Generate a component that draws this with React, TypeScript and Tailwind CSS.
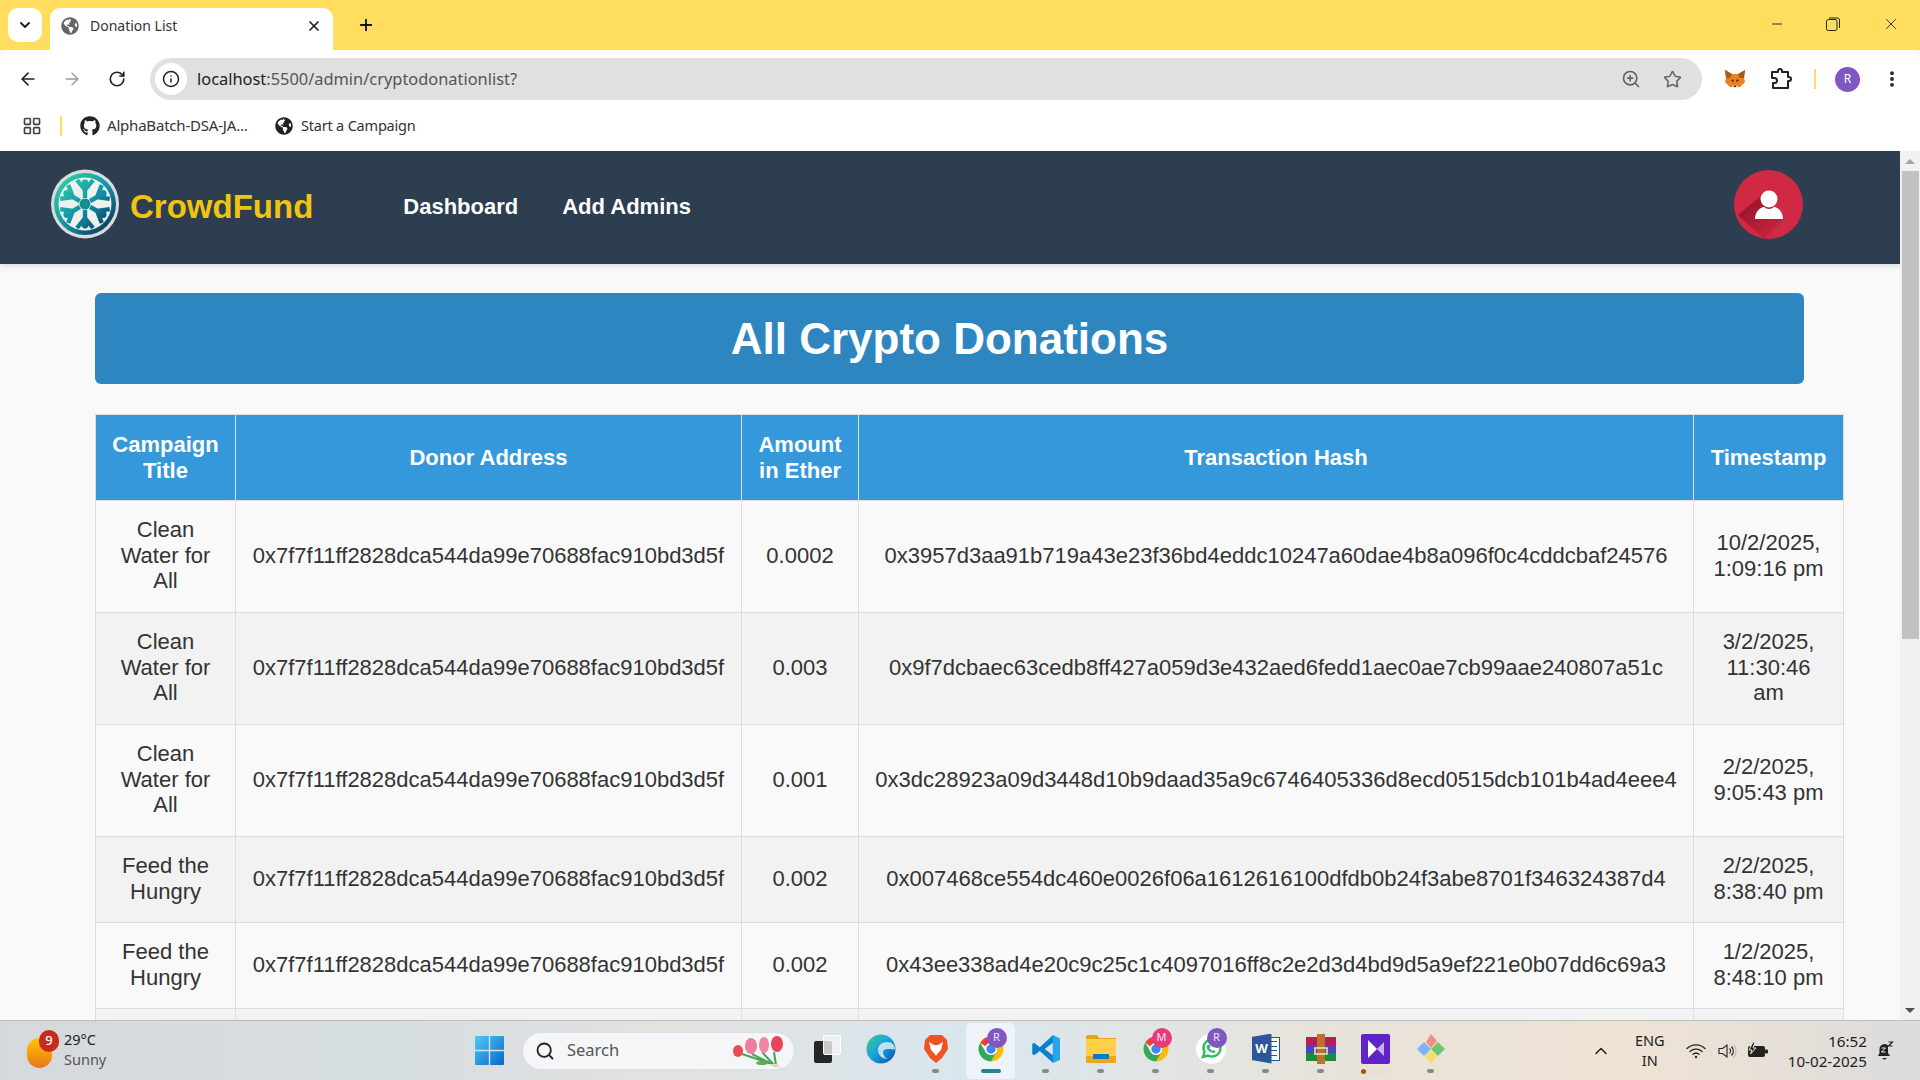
import React from "react";
import { FaGithub, FaGlobeAmericas } from "react-icons/fa";
import { ArrowLeft, ArrowRight, RotateCw, Info, ZoomIn, Star, EllipsisVertical, X, Plus, ChevronDown, ChevronUp, Minus, LayoutGrid, Search } from "lucide-react";

const rows = [
  ["Clean Water for All", "0.0002", "0x3957d3aa91b719a43e23f36bd4eddc10247a60dae4b8a096f0c4cddcbaf24576", "10/2/2025, 1:09:16 pm"],
  ["Clean Water for All", "0.003", "0x9f7dcbaec63cedb8ff427a059d3e432aed6fedd1aec0ae7cb99aae240807a51c", "3/2/2025, 11:30:46 am"],
  ["Clean Water for All", "0.001", "0x3dc28923a09d3448d10b9daad35a9c6746405336d8ecd0515dcb101b4ad4eee4", "2/2/2025, 9:05:43 pm"],
  ["Feed the Hungry", "0.002", "0x007468ce554dc460e0026f06a1612616100dfdb0b24f3abe8701f346324387d4", "2/2/2025, 8:38:40 pm"],
  ["Feed the Hungry", "0.002", "0x43ee338ad4e20c9c25c1c4097016ff8c2e2d3d4bd9d5a9ef221e0b07dd6c69a3", "1/2/2025, 8:48:10 pm"],
];
const donor = "0x7f7f11ff2828dca544da99e70688fac910bd3d5f";

function rot(x: number, y: number, a: number) {
  const r = (a * Math.PI) / 180;
  const dx = x - 35;
  const dy = y - 35;
  return `${(35 + dx * Math.cos(r) - dy * Math.sin(r)).toFixed(2)} ${(35 + dx * Math.sin(r) + dy * Math.cos(r)).toFixed(2)}`;
}

function Logo() {
  return (
    <svg width="70" height="70" viewBox="0 0 70 70" className="shrink-0">
      <defs>
        <linearGradient id="lg" gradientUnits="userSpaceOnUse" x1="10" y1="8" x2="60" y2="62">
          <stop offset="0" stopColor="#2fd3a2" />
          <stop offset="0.55" stopColor="#0f8ea8" />
          <stop offset="1" stopColor="#0b3656" />
        </linearGradient>
      </defs>
      <ellipse cx="35" cy="35" rx="34" ry="34.5" fill="#d8dcdc" />
      <circle cx="35" cy="35" r="31" fill="url(#lg)" />
      <circle cx="35" cy="35" r="26.5" fill="#eef2ee" />
      {[0, 60, 120, 180, 240, 300].map((a) => (
        <path
          key={a}
          d={`M${rot(35, 29, a)} L${rot(35, 20, a)} M${rot(35, 21, a)} L${rot(27, 11, a)} M${rot(35, 21, a)} L${rot(43, 11, a)}`}
          stroke="url(#lg)"
          strokeWidth="4.4"
          fill="none"
          strokeLinecap="butt"
        />
      ))}
      <circle cx="35" cy="35" r="5.5" fill="#13908e" />
      {[30, 90, 150, 210, 270, 330].map((a) => (
        <circle key={a} cx={35 + 21 * Math.cos((a * Math.PI) / 180)} cy={35 + 21 * Math.sin((a * Math.PI) / 180)} r="3.4" fill="url(#lg)" />
      ))}
    </svg>
  );
}

function Avatar() {
  return (
    <svg width="69" height="69" viewBox="0 0 69 69" className="shrink-0">
      <defs>
        <linearGradient id="sh" x1="0" y1="0" x2="1" y2="1">
          <stop offset="0" stopColor="#8f1029" />
          <stop offset="1" stopColor="#cf2842" />
        </linearGradient>
        <clipPath id="cc"><circle cx="34.5" cy="34.5" r="34.5" /></clipPath>
      </defs>
      <circle cx="34.5" cy="34.5" r="34.5" fill="#d02943" />
      <path clipPath="url(#cc)" d="M28 25 L50 49 L30 69 L4 45 Z" fill="url(#sh)" />
      <circle cx="35" cy="29" r="8.5" fill="#fff" />
      <path d="M21 49 C21 42 26 37 30 37 Q35 41 40 37 C44 37 49 42 49 49 Z" fill="#fff" />
    </svg>
  );
}

function Fox() {
  return (
    <svg width="22" height="20" viewBox="0 0 22 20">
      <path d="M1 1 L8 5 H14 L21 1 L20 9 L21 13 L16 18 H6 L1 13 L2 9 Z" fill="#ee7f1f" />
      <path d="M1 1 L8 5 L6 9 L2 9 Z M21 1 L14 5 L16 9 L20 9 Z" fill="#a9591b" />
      <path d="M7 12 L9 10 L10 13 Z M15 12 L13 10 L12 13 Z" fill="#3a2a1c" />
      <path d="M8 16 L11 18 L14 16 L13 18.8 H9 Z" fill="#e9dfd4" />
      <path d="M10 17 h2 v1 h-2z" fill="#222" />
    </svg>
  );
}

function ExtPuzzle() {
  return (
    <svg width="22" height="22" viewBox="0 0 22 22" fill="none" stroke="#222" strokeWidth="2" strokeLinejoin="round" className="ml-[24px] shrink-0">
      <path d="M2 4 H8 V3 A2 2 0 0 1 12 3 V4 H18 V9 H19 A2 2 0 0 1 19 13 H18 V20 H3 V15 H4.5 A2.5 2.5 0 0 0 4.5 10 H2 Z" />
    </svg>
  );
}

const Dot = () => <span className="block w-[7px] h-[4px] rounded-full bg-[#8a8a8a]" />;

function Chrome({ size = 30 }: { size?: number }) {
  return (
    <svg width={size} height={size} viewBox="0 0 48 48">
      <path d="M24 4 A20 20 0 0 1 41.3 14 H24 A10 10 0 0 0 15 19.6 L6.7 14 A20 20 0 0 1 24 4Z" fill="#ea4335" />
      <path d="M41.3 14 A20 20 0 0 1 24 44 L33 28 A10 10 0 0 0 24 14Z" fill="#fbbc04" />
      <path d="M24 44 A20 20 0 0 1 6.7 14 L15.5 29 A10 10 0 0 0 33 28Z" fill="#34a853" />
      <circle cx="24" cy="24" r="8.5" fill="#4285f4" stroke="#fff" strokeWidth="2" />
    </svg>
  );
}

function Badge({ c, t }: { c: string; t: string }) {
  return (
    <span className="absolute right-[1px] top-[-4px] w-[20px] h-[20px] rounded-full flex items-center justify-center text-[11px] text-[#f0e8ff]" style={{ background: c }}>
      {t}
    </span>
  );
}

function Slot({ children, active, bar }: { children: React.ReactNode; active?: boolean; bar?: React.ReactNode }) {
  return (
    <div className={`relative w-[49px] mx-[3px] h-[56px] rounded-[5px] flex flex-col items-center pt-[9px] ${active ? "bg-[#edf3f8]" : ""}`}>
      <div className="relative w-[34px] h-[34px] flex items-center justify-center">{children}</div>
      <div className="mt-[3px] h-[5px] flex items-center justify-center">{bar}</div>
    </div>
  );
}

export default function App() {
  const font = "font-['Liberation_Sans','Arial',sans-serif]";
  const ui = "font-['Noto_Sans',sans-serif]";
  const cell = "border border-[#ddd] pt-[16px] pb-[18px] text-center";
  return (
    <div className={`w-[1920px] h-[1080px] overflow-hidden flex flex-col bg-[#f9f9f9] ${font}`}>
      {/* tab strip */}
      <div className={`h-[50px] bg-[#ffdd5e] flex items-end shrink-0 ${ui}`}>
        <div className="w-[34px] h-[34px] ml-[8px] mb-[8px] bg-white rounded-[10px] flex items-center justify-center">
          <ChevronDown size={16} strokeWidth={3} color="#222" />
        </div>
        <div className="w-[283px] h-[42px] ml-[8px] bg-white rounded-t-[10px] flex items-center pl-[11px] pr-[11px] pb-[7px]">
          <FaGlobeAmericas size={18} color="#666" className="shrink-0" />
          <span className="ml-[11px] text-[14px] text-[#333] flex-1">Donation List</span>
          <X size={16} strokeWidth={2.6} color="#222" />
        </div>
        <div className="ml-[24px] mb-[16px]">
          <Plus size={18} strokeWidth={2.4} color="#111" />
        </div>
        <div className="ml-auto flex items-center mb-[17px] mr-[20px] text-[#222]">
          <Minus size={16} strokeWidth={1.4} className="mr-[41px]" />
          <svg width="14" height="14" viewBox="0 0 14 14" fill="none" stroke="#222" strokeWidth="1" className="mr-[42px]">
            <rect x="0.5" y="2.5" width="10.5" height="11" rx="2" />
            <path d="M3 1h8.5a2 2 0 0 1 2 2v8" />
          </svg>
          <X size={18} strokeWidth={1.2} />
        </div>
      </div>
      {/* toolbar */}
      <div className={`h-[50px] bg-white flex items-center shrink-0 rounded-tl-[10px] rounded-tr-[10px] pt-[8px] ${ui}`}>
        <ArrowLeft size={20} strokeWidth={2} className="ml-[18px]" color="#222" />
        <ArrowRight size={20} strokeWidth={1.6} className="ml-[24px]" color="#999" />
        <RotateCw size={18} strokeWidth={2.2} className="ml-[26px]" color="#222" />
        <div className="ml-[24px] w-[1552px] h-[42px] bg-[#e0e0e0] rounded-full flex items-center pl-[5px]">
          <div className="w-[32px] h-[32px] bg-white rounded-full flex items-center justify-center">
            <Info size={18} color="#222" />
          </div>
          <span className="ml-[10px] text-[16.4px] text-[#555]"><span className="text-[#222]">localhost</span>:5500/admin/cryptodonationlist?</span>
          <ZoomIn size={20} strokeWidth={2} className="ml-auto mr-[22px]" color="#666" />
          <Star size={19} strokeWidth={2} className="mr-[20px]" color="#666" />
        </div>
        <div className="ml-[22px]"><Fox /></div>
        <ExtPuzzle />
        <span className="ml-[22px] w-[2px] h-[20px] bg-[#ffdd5e]" />
        <span className="ml-[19px] w-[25px] h-[25px] rounded-full bg-[#7e57c2] text-white text-[12px] flex items-center justify-center">R</span>
        <EllipsisVertical size={20} strokeWidth={2.6} className="ml-[22px]" color="#222" />
      </div>
      {/* bookmarks */}
      <div className={`h-[51px] bg-white flex items-center shrink-0 pl-[22px] tracking-[-0.2px] text-[#333] ${ui}`}>
        <LayoutGrid size={20} strokeWidth={2} color="#444" />
        <span className="ml-[18px] w-[2px] h-[20px] bg-[#ffdd5e]" />
        <FaGithub size={20} color="#222" className="ml-[18px]" />
        <span className="ml-[7px] w-[143px] text-[15px] whitespace-nowrap">AlphaBatch-DSA-JA...</span>
        <FaGlobeAmericas size={18} color="#222" className="ml-[25px]" />
        <span className="ml-[8px] text-[14.5px]">Start a Campaign</span>
      </div>
      {/* page */}
      <div className="flex-1 min-h-0 flex">
        <div className="flex-1 min-w-0 overflow-hidden flex flex-col">
          <nav className="h-[113px] bg-[#2c3e50] shrink-0 flex items-center pl-[50px] pr-[97px] pb-[7px] shadow-[0_2px_6px_rgba(0,0,0,0.12)] relative">
            <Logo />
            <span className="ml-[10px] mt-[6px] text-[33px] font-bold text-[#f1c40f]">CrowdFund</span>
            <span className="ml-[90px] mt-[4px] text-[22px] font-bold text-white">Dashboard</span>
            <span className="ml-[44px] mt-[4px] text-[22px] font-bold text-white">Add Admins</span>
            <div className="ml-auto"><Avatar /></div>
          </nav>
          <main className="pl-[95px] pt-[29px]">
            <h1 className="w-[1709px] h-[91px] bg-[#2e86c1] rounded-[6px] flex items-center justify-center text-white font-bold text-[44px]">All Crypto Donations</h1>
            <table className="mt-[30px] w-[1748px] table-fixed border-collapse text-[22px] leading-[25.5px] text-[#333]">
              <colgroup>
                <col className="w-[140px]" />
                <col className="w-[506px]" />
                <col className="w-[117px]" />
                <col className="w-[835px]" />
                <col className="w-[150px]" />
              </colgroup>
              <thead>
                <tr className="bg-[#3498db] text-white font-bold h-[86px]">
                  {["Campaign Title", "Donor Address", "Amount in Ether", "Transaction Hash", "Timestamp"].map((h) => (
                    <th key={h} className="border border-[#ddd] px-[16px] font-bold text-center leading-[26px]">{h}</th>
                  ))}
                </tr>
              </thead>
              <tbody>
                {rows.map((r, i) => (
                  <tr key={i} className={`${i % 2 === 0 ? "bg-[#f9f9f9]" : "bg-[#f2f2f2]"} ${i < 3 ? "h-[112px]" : "h-[86px]"}`}>
                    <td className={`${cell} px-[16px]`}>{r[0]}</td>
                    <td className={`${cell} px-[2px]`}>{donor}</td>
                    <td className={`${cell} px-[2px]`}>{r[1]}</td>
                    <td className={`${cell} px-[2px]`}>{r[2]}</td>
                    <td className={`${cell} px-[16px]`}>{r[3]}</td>
                  </tr>
                ))}
                <tr className="bg-[#f2f2f2] h-[86px]">
                  <td className="border border-[#ddd]" />
                  <td className="border border-[#ddd]" />
                  <td className="border border-[#ddd]" />
                  <td className="border border-[#ddd]" />
                  <td className="border border-[#ddd]" />
                </tr>
              </tbody>
            </table>
          </main>
        </div>
        {/* scrollbar */}
        <div className="w-[20px] shrink-0 bg-[#f1f1f1] flex flex-col items-center">
          <div className="h-[20px] flex items-center justify-center shrink-0">
            <span className="w-0 h-0 border-x-[5px] border-x-transparent border-b-[5px] border-b-[#a3a3a3]" />
          </div>
          <div className="w-[17px] h-[468px] bg-[#c1c1c1] shrink-0" />
          <div className="mt-auto h-[20px] flex items-center justify-center shrink-0">
            <span className="w-0 h-0 border-x-[5px] border-x-transparent border-t-[5px] border-t-[#505050]" />
          </div>
        </div>
      </div>
      {/* taskbar */}
      <div className={`h-[60px] shrink-0 border-t border-[#bdbdbd] flex items-center bg-[linear-gradient(90deg,#d6d9db_0%,#d6dde1_20%,#e2e2e0_35%,#dae6ee_50%,#e8e3da_70%,#efe3d4_85%,#dcdcdc_100%)] ${ui}`}>
        <div className="w-[475px] shrink-0 flex items-center pl-[27px]">
          <div className="relative w-[26px] h-[36px]">
            <span className="absolute left-0 top-[5px] w-[25px] h-[30px] rounded-full bg-[linear-gradient(180deg,#ffc400,#e8771a)]" />
            <span className="absolute left-[12px] -top-[3px] w-[20px] h-[22px] rounded-full bg-[#c52c20] text-white text-[13px] font-medium flex items-center justify-center">9</span>
          </div>
          <div className="ml-[11px] mb-[4px] text-[14.5px] leading-[20px]">
            <div className="text-[#222]">29°C</div>
            <div className="text-[#555]">Sunny</div>
          </div>
        </div>
        <svg width="29" height="29" viewBox="0 0 29 29" className="shrink-0">
          <defs>
            <linearGradient id="wn" x1="0" y1="0" x2="1" y2="1">
              <stop offset="0" stopColor="#4fc8f8" />
              <stop offset="1" stopColor="#0669c6" />
            </linearGradient>
          </defs>
          <path d="M1 0h12.8v13.8H0V1a1 1 0 0 1 1-1Zm14.2 0H28a1 1 0 0 1 1 1v12.8H15.2ZM0 15.2h13.8V29H1a1 1 0 0 1-1-1Zm15.2 0H29V28a1 1 0 0 1-1 1H15.2Z" fill="url(#wn)" />
        </svg>
        <div className="ml-[18px] w-[273px] h-[38px] shrink-0 rounded-full bg-[#f4f6f8] border border-[#dcdfe2] flex items-center pl-[12px] relative">
          <Search size={20} strokeWidth={2.2} color="#222" />
          <span className="ml-[12px] text-[16.5px] text-[#555]">Search</span>
          <svg width="54" height="36" viewBox="0 0 54 36" className="absolute right-[8px] top-[1px]">
            <path d="M20 20 L44 32 M30 18 L42 31 M42 18 L44 31 M10 20 L40 30" stroke="#4aa35a" strokeWidth="2" fill="none" />
            <path d="M36 30 L48 34 L46 30Z" fill="#e8dcb0" />
            <ellipse cx="6" cy="17" rx="5" ry="6" fill="#ec4a55" />
            <ellipse cx="19" cy="12" rx="6" ry="8" fill="#ee7ca0" />
            <ellipse cx="32" cy="11" rx="5" ry="8" fill="#f086a6" />
            <ellipse cx="45" cy="10" rx="6" ry="8" fill="#e8445a" />
            <ellipse cx="30" cy="29" rx="6" ry="2" fill="#5bb04f" />
          </svg>
        </div>
        <div className="flex items-center shrink-0 ml-[3px]">
          <Slot>
            <div className="relative w-[24px] h-[28px]">
              <span className="absolute left-0 bottom-0 w-[18px] h-[22px] bg-[#262626] rounded-[2px]" />
              <span className="absolute right-[-3px] top-0 w-[18px] h-[20px] bg-[#f2f2f2]/80 rounded-[2px] border border-[#ffffff]" />
            </div>
          </Slot>
          <Slot>
            <svg width="30" height="30" viewBox="0 0 30 30">
              <defs>
                <linearGradient id="ed" x1="0" y1="0" x2="1" y2="1">
                  <stop offset="0" stopColor="#3ecf8e" />
                  <stop offset="0.5" stopColor="#1b9de2" />
                  <stop offset="1" stopColor="#0b4f9c" />
                </linearGradient>
              </defs>
              <circle cx="15" cy="15" r="14.5" fill="url(#ed)" />
              <path d="M29 15c0-4-3-7-8-7-6 0-9 4-9 8 0 5 4 9 10 9-3-1-5-4-5-7 0-2 2-3 5-3 3 0 5 1 7 0Z" fill="#d8eef4" opacity=".85" />
            </svg>
          </Slot>
          <Slot bar={<Dot />}>
            <svg width="26" height="30" viewBox="0 0 26 30">
              <path d="M7 1 H19 L24 6 L25 15 L19 24 L13 29 L7 24 L1 15 L2 6 Z" fill="#f0531f" />
              <path d="M6 8 L11 11 H15 L20 8 L18 16 L15 19 L13 22 L11 19 L8 16 Z" fill="#fff" />
            </svg>
          </Slot>
          <Slot active bar={<span className="block w-[20px] h-[4px] rounded-full bg-[#2a7f96]" />}>
            <Chrome />
            <Badge c="#7e57c2" t="R" />
          </Slot>
          <Slot bar={<Dot />}>
            <svg width="30" height="30" viewBox="0 0 24 24">
              <path d="M17.5 1 L23 3.5 V20.5 L17.5 23 L7 13.5 L2.5 17 L1 16 V8 L2.5 7 L7 10.5Z M17.5 7 L11 12 L17.5 17Z" fill="#0a7fcb" fillRule="evenodd" />
              <path d="M17.5 1 L23 3.5 V20.5 L17.5 23Z" fill="#25a6ea" />
            </svg>
          </Slot>
          <Slot bar={<Dot />}>
            <svg width="30" height="28" viewBox="0 0 30 28">
              <path d="M0 2 a2 2 0 0 1 2-2 h9 l2 3 h17 v3 H0Z" fill="#e6a415" />
              <rect x="0" y="4" width="30" height="24" fill="#ffcf48" />
              <rect x="0" y="21" width="30" height="7" fill="#e9a81d" />
              <rect x="7" y="19" width="16" height="5" rx="1" fill="#0a78c9" />
            </svg>
          </Slot>
          <Slot bar={<Dot />}>
            <Chrome />
            <Badge c="#e63b78" t="M" />
          </Slot>
          <Slot bar={<Dot />}>
            <svg width="30" height="30" viewBox="0 0 30 30">
              <circle cx="15" cy="15" r="15" fill="#fff" />
              <path d="M7 23 L8.5 18 A8.5 8.5 0 1 1 12 21.5Z" fill="none" stroke="#29c15a" strokeWidth="2.4" />
              <path d="M11.5 11 q1-1 2 0 l1 2 -1 1 q1 2 3 3 l1-1 2 1 q0 2-2 2 q-6-1-7-6Z" fill="#29c15a" />
            </svg>
            <Badge c="#7e57c2" t="R" />
          </Slot>
          <Slot bar={<Dot />}>
            <div className="relative w-[28px] h-[30px]">
              <span className="absolute right-0 top-[3px] w-[14px] h-[24px] bg-white border border-[#2b579a] flex flex-col justify-evenly px-[2px]">
                <i className="block h-[1px] bg-[#2b579a]" /><i className="block h-[1px] bg-[#2b579a]" /><i className="block h-[1px] bg-[#2b579a]" /><i className="block h-[1px] bg-[#2b579a]" />
              </span>
              <span className="absolute left-0 top-0 w-[20px] h-[30px] bg-[#2b579a] text-white text-[13px] font-bold flex items-center justify-center [clip-path:polygon(0_12%,100%_0,100%_100%,0_88%)]">W</span>
            </div>
          </Slot>
          <Slot bar={<Dot />}>
            <svg width="30" height="30" viewBox="0 0 30 30">
              <rect x="0" y="3" width="30" height="8" fill="#b51f56" />
              <rect x="0" y="11" width="30" height="8" fill="#4a46b5" />
              <rect x="0" y="19" width="30" height="8" fill="#1d8b3c" />
              <rect x="11" y="0" width="8" height="30" fill="#b8742a" />
              <rect x="9" y="14" width="12" height="6" fill="none" stroke="#f1dfb8" strokeWidth="1.6" />
            </svg>
          </Slot>
          <Slot bar={<span className="flex items-center w-[29px] h-[4px] rounded-full bg-[#e3ded6]"><i className="block w-[5px] h-[5px] rounded-full bg-[#a05a10]" /></span>}>
            <div className="w-[29px] h-[30px] rounded-[2px] bg-[#5f23c8] flex items-center justify-center">
              <svg width="18" height="20" viewBox="0 0 18 20">
                <path d="M1 1 L10 10 L1 19Z" fill="#fff" />
                <path d="M10 10 L17 3 V17Z" fill="#c7aef0" />
              </svg>
            </div>
          </Slot>
          <Slot bar={<Dot />}>
            <svg width="30" height="30" viewBox="0 0 30 30">
              <path d="M15 0 L21 7 L15 14 L10 8Z" fill="#f28b82" />
              <path d="M8 8 L15 15 L8 22 L1 15Z" fill="#7fb3f5" />
              <path d="M22 8 L29 15 L22 22 L15 15Z" fill="#6cc56f" />
              <path d="M15 16 L21 22 L15 30 L9 22Z" fill="#f7dd6a" />
            </svg>
          </Slot>
        </div>
        <div className="ml-auto flex items-center shrink-0 text-[#222] pr-[26px]">
          <ChevronUp size={20} strokeWidth={1.8} />
          <div className="ml-[21px] mb-[2px] w-[36px] text-center text-[14.5px] leading-[20px]">
            <div>ENG</div>
            <div>IN</div>
          </div>
          <svg width="20" height="16" viewBox="0 0 20 16" fill="none" stroke="#222" strokeWidth="1.3" strokeLinecap="round" className="ml-[18px]">
            <path d="M1 5.5 A13 13 0 0 1 19 5.5 M4 8.5 A9 9 0 0 1 16 8.5 M7 11.3 A4.5 4.5 0 0 1 13 11.3" />
            <circle cx="10" cy="14" r="1.2" fill="#222" stroke="none" />
          </svg>
          <svg width="20" height="18" viewBox="0 0 20 18" fill="none" stroke="#222" strokeWidth="1.1" className="ml-[12px]">
            <path d="M1 6.5 H4.5 L9 3 V15 L4.5 11.5 H1 Z" />
            <path d="M11.5 6.5 A3.5 3.5 0 0 1 11.5 11.5 M13.5 4.5 A6.5 6.5 0 0 1 13.5 13.5" />
            <path d="M15.5 2.5 A9.5 9.5 0 0 1 15.5 15.5" stroke="#bbb" />
          </svg>
          <svg width="21" height="17" viewBox="0 0 21 17" className="ml-[9px]">
            <rect x="1" y="4" width="17" height="11" rx="2" fill="#222" />
            <rect x="18" y="7.5" width="3" height="4" rx="1" fill="#222" />
            <path d="M6 0 L2 8 H5 L3.5 12 L9 6 H6 L8 0 Z" fill="#222" stroke="#efe3d4" strokeWidth="1" />
          </svg>
          <div className="ml-[20px] text-right text-[15.2px] leading-[20px]">
            <div>16:52</div>
            <div>10-02-2025</div>
          </div>
          <svg width="18" height="20" viewBox="0 0 18 20" className="ml-[9px]">
            <path d="M2 15 L3.5 12 V8 A5 5 0 0 1 12 4.5 V12 L14 15 Z" fill="#222" />
            <path d="M6.5 17 h4 a2 1.5 0 0 1 -4 0Z" fill="#222" />
            <path d="M5.5 7 h4 l-4 4 h4" stroke="#f0efec" strokeWidth="1" fill="none" />
            <path d="M12.5 1 h4 l-4 4 h4" stroke="#222" strokeWidth="1.1" fill="none" />
          </svg>
        </div>
      </div>
    </div>
  );
}
